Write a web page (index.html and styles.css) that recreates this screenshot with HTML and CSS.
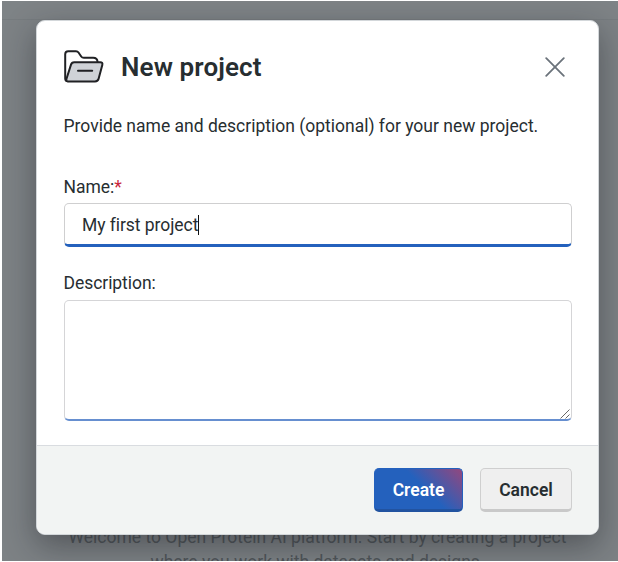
FILE: index.html
```html
<!DOCTYPE html>
<html lang="en">
<head>
<meta charset="utf-8">
<title>New project</title>
<link rel="stylesheet" href="styles.css">
</head>
<body>
<main class="page">
  <div class="topbar"></div>
  <p class="welcome"><span class="welcome-line">Welcome to Open Protein AI platform. Start by creating a project</span><br><span class="welcome-line">where you work with datasets and designs.</span></p>
  <section class="dialog" role="dialog">
    <div class="dialog-body">
      <header class="dialog-header">
        <svg class="folder" viewBox="0 0 40 34" fill="none" stroke="#202124" stroke-width="2" stroke-linejoin="round" stroke-linecap="round">
          <path d="M3.8 31.2Q1.2 31 1.2 28.4V4.2Q1.2 1.2 4.2 1.2H12Q13.6 1.2 14.5 2.5L17.2 6.5Q18.1 7.8 19.8 7.8H29.2Q33.2 7.8 33.6 12"/>
          <path d="M10.2 12.3H36.2Q39 12.3 38.3 15L34.6 28.8Q34 31.4 31 31.4H4.2Q1.8 31.4 2.5 28.8L7 14.6Q7.7 12.3 10.2 12.3Z" fill="#cfd2d7"/>
          <path d="M14 20.8H28.2"/>
        </svg>
        <h1 class="title">New project</h1>
        <svg class="close" viewBox="0 0 20 20" stroke="#6b737b" stroke-width="1.8" stroke-linecap="round"><path d="M1.2 1.2L18.8 18.8M18.8 1.2L1.2 18.8"/></svg>
      </header>
      <p class="intro">Provide name and description (optional) for your new project.</p>
      <label class="label">Name:<span class="required">*</span></label>
      <div class="input"><span class="value">My first project</span><span class="caret"></span></div>
      <label class="label label-desc">Description:</label>
      <div class="textarea"><svg class="grip" viewBox="0 0 10 10" stroke="#666" stroke-width="1"><path d="M.5 9.5L9.5 .5M5.5 9.5L9.5 5.5"/></svg></div>
    </div>
    <footer class="dialog-footer">
      <button class="btn primary">Create</button>
      <button class="btn secondary">Cancel</button>
    </footer>
  </section>
</main>
</body>
</html>
```

FILE: styles.css
```css
* { box-sizing: border-box; }
body { margin: 0; background: #fff; overflow: hidden; font-family: Roboto, sans-serif; color: #272e31; }
.page { position: relative; height: 560px; margin: 1px 0 1px 2px; background: #7d8285; overflow: hidden; }
.topbar { height: 19px; border-bottom: 1px solid #777c7f; background: #7e8386; }
.welcome { position: absolute; top: 524px; left: 0; width: 631px; margin: 0; text-align: center; font-size: 17.5px; line-height: 25px; color: #50565a; white-space: nowrap; }
.dialog { position: absolute; left: 34px; top: 19px; width: 563px; height: 515px; display: flex; flex-direction: column; border: 1px solid #d3d7da; border-radius: 9px; background: #fff; overflow: hidden; box-shadow: 0 11px 32px rgba(25, 25, 30, .42); }
.dialog-body { flex: 1; padding: 26px 26.5px 0; }
.dialog-header { display: flex; align-items: center; height: 40px; }
.folder { width: 40px; height: 34px; }
.title { margin: 0 auto 0 17.5px; font-size: 26px; line-height: 40px; font-weight: 600; letter-spacing: .12px; }
.close { width: 20px; height: 20px; margin-right: 7px; }
.intro { margin: 26px 0 0; font-size: 17.5px; line-height: 26px; white-space: nowrap; }
.label { display: block; margin-top: 35px; font-size: 17.5px; line-height: 26px; letter-spacing: -.05px; }
.required { color: #c9253b; }
.input { display: flex; align-items: center; height: 44px; margin-top: 3px; padding: 2px 17.5px 0; border: 1px solid #cfcfd0; border-bottom: 3px solid #2461bd; border-radius: 5px; font-size: 17.5px; letter-spacing: -.05px; }
.caret { width: 1px; height: 20px; background: #111; }
.label-desc { margin-top: 23px; }
.textarea { display: flex; justify-content: flex-end; align-items: flex-end; height: 121px; margin-top: 4px; padding: 0 1px 0 0; border: 1px solid #d5d5d7; border-bottom: 2px solid #668fd0; border-radius: 5px; }
.grip { width: 10px; height: 10px; }
.dialog-footer { height: 89px; display: flex; justify-content: flex-end; gap: 17px; padding: 22px 26px 0 0; border-top: 1px solid #d9dce0; background: #f2f4f3; }
.btn { height: 44px; padding: 2px 0 0; border-radius: 5px; font: 600 17.5px/38px Roboto, sans-serif; }
.primary { width: 89px; color: #fff; border: 1px solid #2461bd; border-bottom: 3px solid #2253a0; background: linear-gradient(45deg, #2461bd 55%, #93477e 100%); }
.secondary { width: 92px; color: #272e31; border: 1px solid #cfcfcf; border-bottom: 3px solid #c9c9c9; background: #efefef; }
```
